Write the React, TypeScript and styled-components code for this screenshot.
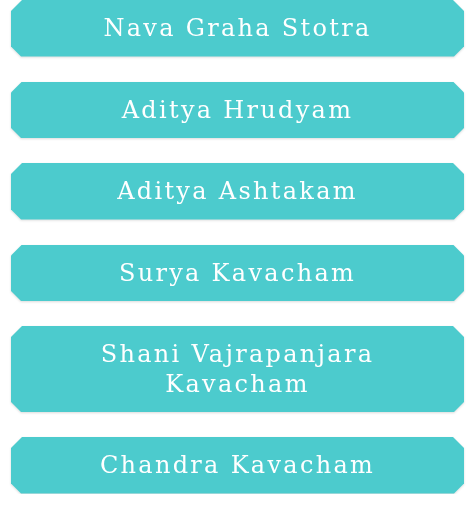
import React, { FC } from "react";
import styled, { createGlobalStyle } from "styled-components";

const items: string[] = [
  "Nava Graha Stotra",
  "Aditya Hrudyam",
  "Aditya Ashtakam",
  "Surya Kavacham",
  "Shani Vajrapanjara Kavacham",
  "Chandra Kavacham",
];

const App: FC = () => {
  return (
    <>
      <GlobalStyle />
      <List>
        {items.map((title) => (
          <ButtonWrap key={title}>
            <StotraButton>{title}</StotraButton>
          </ButtonWrap>
        ))}
      </List>
    </>
  );
};

export default App;

const GlobalStyle = createGlobalStyle`
  body {
    margin: 0;
    background: #ffffff;
    font-family: "DejaVu Serif", serif;
  }
`;

const List = styled.div`
  display: flex;
  flex-direction: column;
  gap: 25px;
  padding: 0 12px 0 11px;
`;

const ButtonWrap = styled.div`
  filter: drop-shadow(0.5px 1px 0.8px rgba(0, 0, 0, 0.14));
`;

const StotraButton = styled.button`
  display: block;
  width: 100%;
  min-height: 56.5px;
  padding: 13px 60px 13px 60px;
  border: none;
  background-color: #4ccbcd;
  color: #ffffff;
  font-family: "DejaVu Serif", serif;
  font-size: 24px;
  line-height: 30px;
  letter-spacing: 2.3px;
  text-align: center;
  cursor: pointer;
  clip-path: polygon(
    11px 0,
    calc(100% - 11px) 0,
    100% 11px,
    100% calc(100% - 10px),
    calc(100% - 10px) 100%,
    10px 100%,
    0 calc(100% - 10px),
    0 11px
  );
`;
